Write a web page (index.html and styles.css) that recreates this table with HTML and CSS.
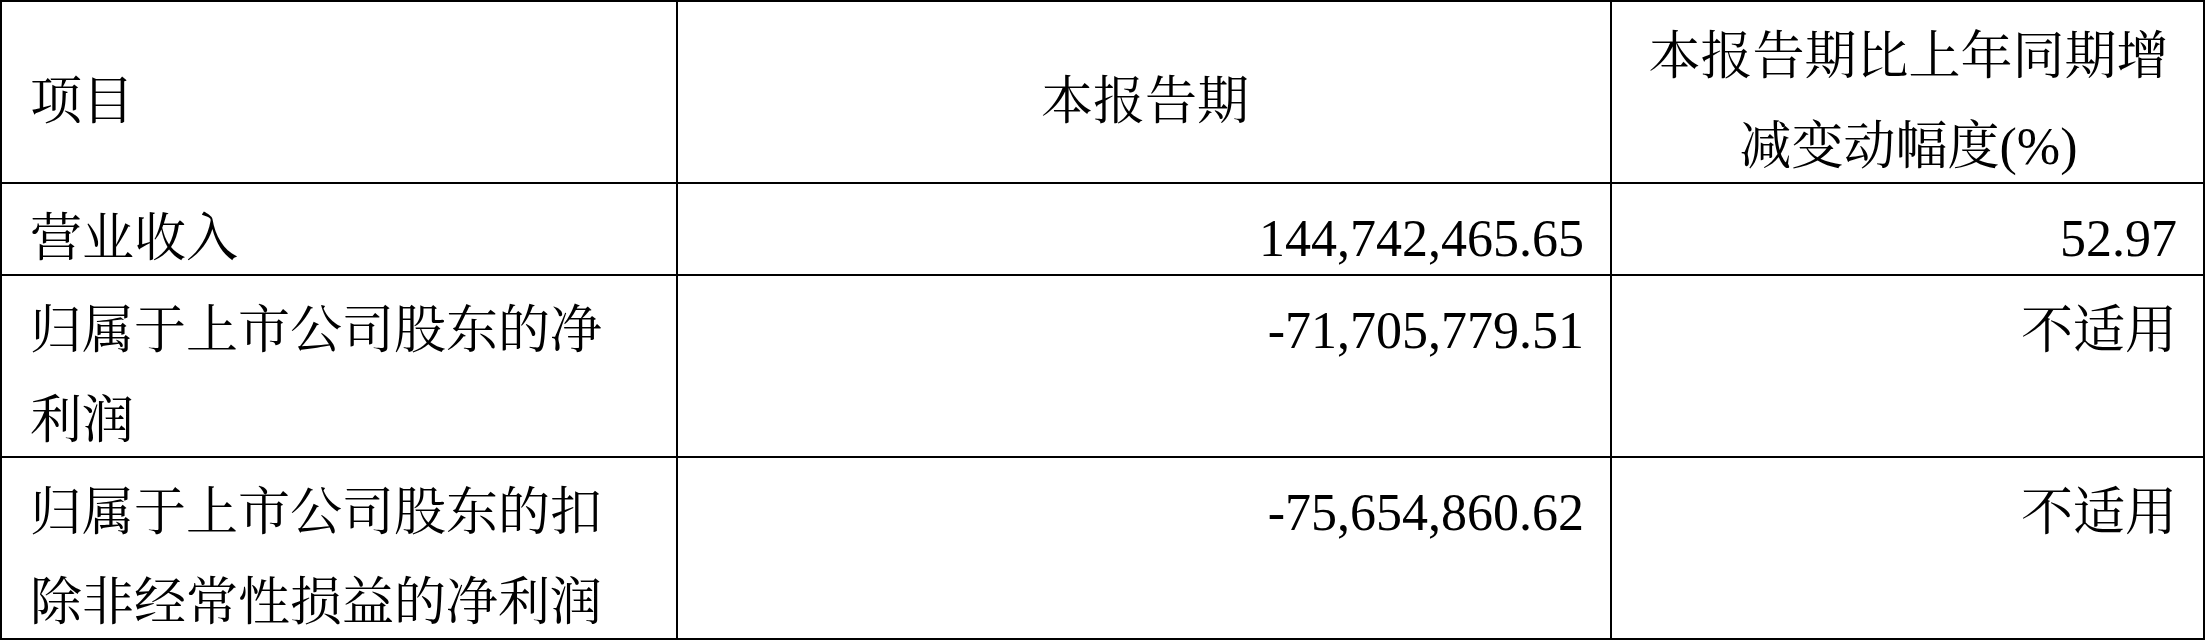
FILE: index.html
```html
<!DOCTYPE html>
<html lang="zh-CN">
<head>
<meta charset="utf-8">
<title>主要会计数据</title>
<link rel="stylesheet" href="styles.css">
</head>
<body>
<table class="report">
<colgroup><col class="c-item"><col class="c-cur"><col class="c-chg"></colgroup>
<thead>
<tr><th class="left"><span class="t">项目</span></th><th class="center"><span class="t">本报告期</span></th><th class="center"><span class="t">本报告期比上年同期增<br>减变动幅度(%)</span></th></tr>
</thead>
<tbody>
<tr><td class="left"><span class="t">营业收入</span></td><td class="num"><span class="t">144,742,465.65</span></td><td class="num"><span class="t">52.97</span></td></tr>
<tr><td class="left"><span class="t">归属于上市公司股东的净<br>利润</span></td><td class="num top"><span class="t">-71,705,779.51</span></td><td class="num top"><span class="t">不适用</span></td></tr>
<tr><td class="left"><span class="t">归属于上市公司股东的扣<br>除非经常性损益的净利润</span></td><td class="num top"><span class="t">-75,654,860.62</span></td><td class="num top"><span class="t">不适用</span></td></tr>
</tbody>
</table>
</body>
</html>
```
FILE: styles.css
```css
html, body {
  margin: 0;
  padding: 0;
  background: #ffffff;
}

body {
  font-family: "Liberation Serif", "Noto Serif CJK SC", "Noto Sans CJK SC", serif;
  color: #000000;
}

.report {
  border-collapse: collapse;
  table-layout: fixed;
  width: 2205px;
}

.c-item { width: 676px; }
.c-cur { width: 934px; }
.c-chg { width: 593px; }

.report th,
.report td {
  border: 2px solid #000000;
  padding: 0 26px 0 28px;
  font-size: 82px;
  line-height: 90px;
  font-weight: normal;
  vertical-align: middle;
  white-space: nowrap;
}

.report .top {
  vertical-align: top;
}

.left { text-align: left; }
.center { text-align: center; }
.num { text-align: right; }

.t {
  font-size: 52px;
  line-height: 52px;
}
```
